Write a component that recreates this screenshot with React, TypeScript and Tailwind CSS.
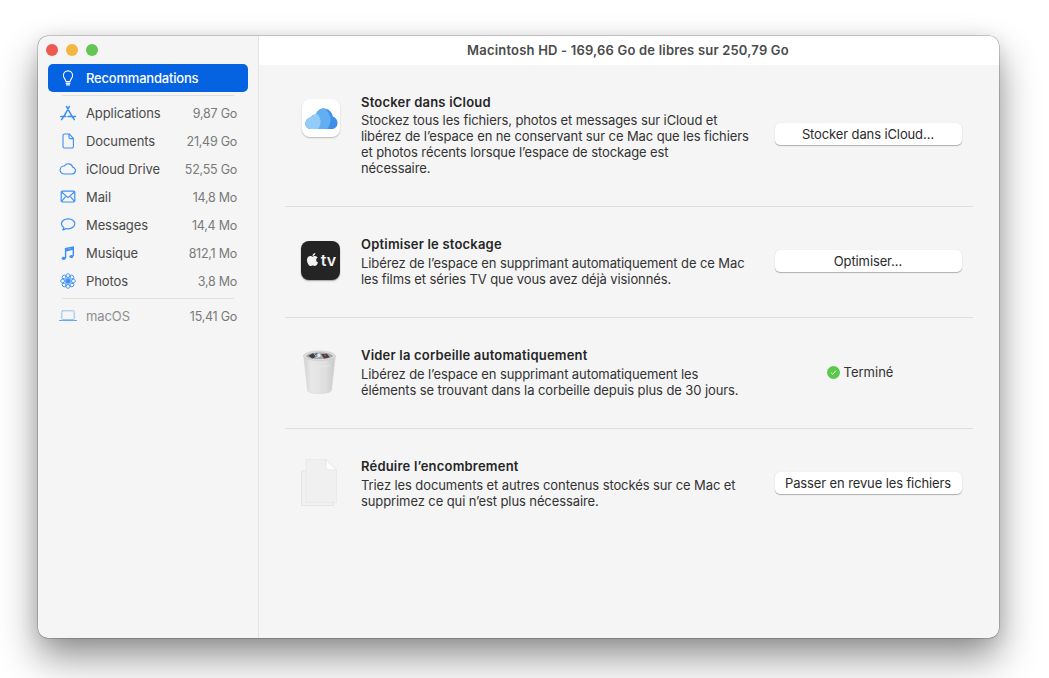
import React from "react";
import { FaApple } from "react-icons/fa";

const blue = "#3b8ff5";

const Svg = ({ children, w = 18, h = 18, vb = "0 0 18 18" }: { children: React.ReactNode; w?: number; h?: number; vb?: string }) => (
  <svg width={w} height={h} viewBox={vb} fill="none" stroke={blue} strokeWidth={1.1} strokeLinecap="round" strokeLinejoin="round">
    {children}
  </svg>
);

const BulbIcon = () => (
  <svg width="18" height="18" viewBox="0 0 18 18" fill="none" stroke="#ffffff" strokeWidth="1.1" strokeLinecap="round" strokeLinejoin="round">
    <path d="M6.900 12.600c0-2.200-2.500-3.300-2.500-6.100a4.600 4.600 0 0 1 9.200 0c0 2.800-2.500 3.900-2.500 6.100z" />
    <path d="M7.200 14.300h3.600M7.600 15.900h2.800" strokeWidth="1.300" />
  </svg>
);
const AppsIcon = () => (
  <Svg>
    <path d="M10.400 2.400 5 12.400M7.400 2.400l6.200 11M1.800 12.600h5M9 12.600h7.400M2.600 15.600l1.500-2.300M14 13.500l1.300 2.100" strokeWidth="1.500" />
  </Svg>
);
const DocIcon = () => (
  <Svg>
    <path d="M4 3.600A1.600 1.600 0 0 1 5.600 2h4.600L14.400 6.400v8a1.600 1.600 0 0 1-1.600 1.600H5.600A1.600 1.600 0 0 1 4 14.400z" />
    <path d="M10 2.200v3a1.400 1.400 0 0 0 1.400 1.400h2.900" />
  </Svg>
);
const CloudIcon = () => (
  <Svg>
    <path d="M4.800 14h8.400a3.400 3.400 0 0 0 .6-6.700A4.600 4.600 0 0 0 5.400 6 4 4 0 0 0 4.800 14z" />
  </Svg>
);
const MailIcon = () => (
  <Svg>
    <rect x="2.200" y="3.200" width="13.600" height="10.800" rx="1.200" strokeWidth="1.200" />
    <path d="m2.600 4 6.400 5.600L15.400 4M2.800 13.200 7 8.200M15.200 13.200 11 8.200" />
  </Svg>
);
const MsgIcon = () => (
  <Svg>
    <path d="M9.200 2.800c3.700 0 6.600 2.200 6.600 5s-2.900 5-6.600 5c-.8 0-1.500-.1-2.200-.3-.8.8-2 1.300-3.200 1.400.6-.7 1-1.500 1-2.400C3.400 10.600 2.400 9.300 2.400 7.800c0-2.800 3-5 6.800-5z" strokeWidth="1.200" />
  </Svg>
);
const MusicIcon = () => (
  <svg width="18" height="18" viewBox="0 0 18 18" fill={blue} stroke={blue}>
    <path d="M6.600 14V4.600L14.300 3v9" fill="none" strokeWidth="1.400" />
    <path d="M6.600 6.400 14.300 4.800" fill="none" strokeWidth="2" />
    <ellipse cx="4.700" cy="14.300" rx="2" ry="1.600" stroke="none" />
    <ellipse cx="12.400" cy="12.500" rx="2" ry="1.600" stroke="none" />
  </svg>
);
const PhotosIcon = () => (
  <Svg>
    {[0, 45, 90, 135, 180, 225, 270, 315].map((a) => (
      <ellipse key={a} cx="9" cy="4.900" rx="2.300" ry="3.300" transform={`rotate(${a} 9 9)`} strokeWidth="0.900" />
    ))}
    <circle cx="9" cy="9" r="2" fill={blue} stroke="none" />
  </Svg>
);
const LaptopIcon = () => (
  <svg width="18" height="18" viewBox="0 0 18 18" fill="none" strokeLinecap="round" strokeLinejoin="round">
    <rect x="2.800" y="3.800" width="12.400" height="8.800" rx="0.800" stroke="#8fc1f2" strokeWidth="1" />
    <path d="M0.500 13.500h17" stroke="#62aaf0" strokeWidth="1.200" />
  </svg>
);

const ICloudTile = () => (
  <div className="w-[38px] h-[38px] rounded-[8px] bg-white flex items-center justify-center shadow-[0_1px_1.500px_rgba(0,0,0,0.25)]">
    <svg width="33" height="21" viewBox="0 0 33 21">
      <defs>
        <clipPath id="cloudClip">
          <path d="M6 21C2.500 21 .5 18.500 .5 15.500C.5 12.500 2.500 10 5.500 9.500C6.500 7.500 8.500 6.500 10.500 6.800C12 3 15 .5 18.500 .5C23.500 .5 27 4 27.800 8.500C30.800 9.500 32.500 12 32.500 15C32.500 18.500 30 21 27 21Z" />
        </clipPath>
      </defs>
      <g clipPath="url(#cloudClip)">
        <rect width="33" height="21" fill="#3f8eea" />
        <path d="M0 0h19c3 2 6 6 6.500 10.500.3 4-1 8-3.500 10.500H0z" fill="#62aef3" />
        <path d="M0 4h8c4 1 7 4 7.500 8.500.3 3.500-.7 6.500-2.500 8.500H0z" fill="#93cbf9" />
      </g>
    </svg>
  </div>
);

const TvTile = () => (
  <div className="w-[39px] h-[39px] rounded-[8px] bg-[#242424] flex items-center justify-center gap-[1px] shadow-[0_1px_1.500px_rgba(0,0,0,0.35)] text-[#f2f2f2]">
    <FaApple size={15} className="mt-[-3px]" />
    <span className="text-[16px] leading-none font-semibold mt-[-2px]">tv</span>
  </div>
);

const TrashIcon = () => (
  <svg width="35" height="44" viewBox="0 0 38 46" preserveAspectRatio="none">
    <defs>
      <linearGradient id="tr" x1="0" y1="0" x2="1" y2="0">
        <stop offset="0" stopColor="#d3d3d3" />
        <stop offset="0.25" stopColor="#e8e8e8" />
        <stop offset="0.7" stopColor="#dedede" />
        <stop offset="1" stopColor="#c9c9c9" />
      </linearGradient>
    </defs>
    <path d="M2 7.500C8 10.500 29 10.500 36 7.500L32 42c-.5 2-5 3.500-13 3.500S6.500 44 6 42z" fill="url(#tr)" stroke="#d5d5d5" strokeWidth="0.600" />
    <path d="M1.500 6.500C2 3.500 8 1 19 1s17 2.500 17.500 5.500c-.5 2.800-7 4.500-17.500 4.500S2 9.300 1.500 6.500z" fill="#dcdcdc" stroke="#c8c8c8" strokeWidth="0.600" />
    <path d="M4 6.500C6 4 11 2.500 19 2.500S32 4 34 6.500c-3 2-8.500 3-15 3s-12-1-15-3z" fill="#a6a6a6" />
    <path d="M7 6l5-2.500 3 3.500-4 2zM21 4.500l6-.5 3 3.500-6 1.500zM15 3.500l4 1-2 2-3-1z" fill="#3d3d3d" />
    <path d="M14 5.500l5-2 1.500 3-4.500 1.500z" fill="#eeeeee" />
    <path d="M14.500 5.500l2-.8.8 2-2 .7z" fill="#4fa8e8" />
    <path d="M24 4.500l3 .5-1 2-2.500-.5z" fill="#a8494a" />
    <path d="M8 16c6 2 16 2 22 0" stroke="#e6e6e6" strokeWidth="1" fill="none" />
  </svg>
);

const DocsIcon = () => (
  <svg width="36" height="47" viewBox="0 0 36 47">
    <path d="M0.500 12h32v34.500h-32z" fill="#f1f1f1" stroke="#dddddd" strokeWidth="0.700" />
    <path d="M5 0.500h20L35.500 11v32.500H5z" fill="#f0f0f0" stroke="#e4e4e4" strokeWidth="0.600" />
    <path d="M25 0.500V8a3 3 0 0 0 3 3h7.500z" fill="#fdfdfd" stroke="#dddddd" strokeWidth="0.600" />
  </svg>
);

const items: [string, string, React.ReactNode][] = [
  ["Applications", "9,87 Go", <AppsIcon />],
  ["Documents", "21,49 Go", <DocIcon />],
  ["iCloud Drive", "52,55 Go", <CloudIcon />],
  ["Mail", "14,8 Mo", <MailIcon />],
  ["Messages", "14,4 Mo", <MsgIcon />],
  ["Musique", "812,1 Mo", <MusicIcon />],
  ["Photos", "3,8 Mo", <PhotosIcon />],
];

const SideRow = ({ label, size, icon, muted }: { label: string; size: string; icon: React.ReactNode; muted?: boolean }) => (
  <div className="h-[28px] flex items-center pl-[11px] pr-[11px]">
    <div className="w-[18px] h-[18px] flex items-center justify-center">{icon}</div>
    <span className={`ml-[9px] flex-1 tracking-[-0.1px] ${muted ? "text-[#8e8e8e]" : "text-[#4a4a4a]"}`}>{label}</span>
    <span className="text-[#7a7a7a] text-[12.500px] tracking-[-0.25px] mt-[1px]">{size}</span>
  </div>
);

const Section = ({ icon, iconTop, title, lines, action, first, last }: { icon: React.ReactNode; iconTop: string; title: string; lines: string[]; action: React.ReactNode; first?: boolean; last?: boolean }) => (
  <div className={`flex items-center ${first ? "pt-[29px] pb-[29.300px]" : "pt-[29.500px] pb-[29.400px]"} ${last ? "" : "border-b border-[#dedede]"}`}>
    <div className={`w-[76px] pl-[16px] self-start ${iconTop}`}>{icon}</div>
    <div className="w-[413px]">
      <div className={`font-semibold text-[#262626] leading-[16px] tracking-[0.2px] ${first ? "mb-[1.500px]" : "mb-[2.500px]"}`}>{title}</div>
      {lines.map((l) => (
        <div key={l} className="text-[#333333] leading-[16.300px] tracking-[-0.1px] whitespace-nowrap">{l}</div>
      ))}
    </div>
    <div className="w-[188px] flex justify-center mb-[2px]">{action}</div>
  </div>
);

const Btn = ({ children }: { children: React.ReactNode }) => (
  <button className="w-[187px] h-[22px] rounded-[5px] bg-white text-[#2b2b2b] tracking-[-0.12px] flex items-center justify-center shadow-[0_1px_1px_rgba(0,0,0,0.28),0_0_1px_rgba(0,0,0,0.14)]">
    {children}
  </button>
);

export default function App() {
  return (
    <div
      className="w-[1049px] h-[678px] bg-white overflow-hidden pl-[38px] pt-[36px] text-[13px] leading-[16px]"
      style={{ fontFamily: "Inter, 'Noto Sans', sans-serif" }}
    >
      <div className="w-[961px] h-[602px] rounded-[10px] bg-[#f5f5f5] flex overflow-hidden shadow-[0_0_0_0.500px_rgba(0,0,0,0.35),0_20px_38px_rgba(0,0,0,0.42),0_2px_18px_rgba(0,0,0,0.1)]">
        <aside className="w-[221px] shrink-0 border-r border-[#e4e4e4] px-[10px]">
          <div className="h-[28px] flex items-center gap-[8px] ml-[-2px]">
            <span className="w-[12px] h-[12px] rounded-full bg-[#ee5a52]" />
            <span className="w-[12px] h-[12px] rounded-full bg-[#f4b544]" />
            <span className="w-[12px] h-[12px] rounded-full bg-[#62c554]" />
          </div>
          <div className="h-[28px] rounded-[5px] bg-[#0563e1] flex items-center pl-[11px] text-white font-medium">
            <BulbIcon />
            <span className="ml-[9px] tracking-[-0.2px]">Recommandations</span>
          </div>
          <div className="h-[1px] bg-[#e0e0e0] mx-[14px] mt-[3px] mb-[3px]" />
          <div className="mt-[3px]">
            {items.map(([l, s, i]) => (
              <SideRow key={l} label={l} size={s} icon={i} />
            ))}
          </div>
          <div className="h-[1px] bg-[#e0e0e0] mx-[14px] mt-[3px] mb-[3px]" />
          <SideRow label="macOS" size="15,41 Go" icon={<LaptopIcon />} muted />
        </aside>
        <main className="flex-1 flex flex-col">
          <header className="h-[29px] bg-white flex items-center justify-center font-semibold text-[#4b4b4b] tracking-[0.19px] pr-[2px] pb-[2px]">
            Macintosh HD - 169,66 Go de libres sur 250,79 Go
          </header>
          <div className="pl-[26px] pr-[26px] w-[740px]">
            <Section
              first
              icon={<ICloudTile />}
              iconTop="pt-[5px] pl-[17px]"
              title="Stocker dans iCloud"
              lines={[
                "Stockez tous les fichiers, photos et messages sur iCloud et",
                "libérez de l’espace en ne conservant sur ce Mac que les fichiers",
                "et photos récents lorsque l’espace de stockage est",
                "nécessaire.",
              ]}
              action={<Btn>Stocker dans iCloud…</Btn>}
            />
            <Section
              icon={<TvTile />}
              iconTop="pt-[5px]"
              title="Optimiser le stockage"
              lines={[
                "Libérez de l’espace en supprimant automatiquement de ce Mac",
                "les films et séries TV que vous avez déjà visionnés.",
              ]}
              action={<Btn>Optimiser…</Btn>}
            />
            <Section
              icon={<TrashIcon />}
              iconTop="pt-[2.500px] pl-[17px]"
              title="Vider la corbeille automatiquement"
              lines={[
                "Libérez de l’espace en supprimant automatiquement les",
                "éléments se trouvant dans la corbeille depuis plus de 30 jours.",
              ]}
              action={
                <span className="flex items-center gap-[4px] text-[#333333] pr-[16px]">
                  <svg width="13" height="13" viewBox="0 0 13 13">
                    <circle cx="6.500" cy="6.500" r="6.500" fill="#5ac94c" />
                    <path d="m4.200 6.800 1.600 1.600 3-3.700" fill="none" stroke="#ffffff" strokeWidth="1" />
                  </svg>
                  Terminé
                </span>
              }
            />
            <Section
              icon={<DocsIcon />}
              iconTop="pt-[0.500px]"
              title="Réduire l’encombrement"
              lines={[
                "Triez les documents et autres contenus stockés sur ce Mac et",
                "supprimez ce qui n’est plus nécessaire.",
              ]}
              action={<Btn>Passer en revue les fichiers</Btn>}
              last
            />
          </div>
        </main>
      </div>
    </div>
  );
}
